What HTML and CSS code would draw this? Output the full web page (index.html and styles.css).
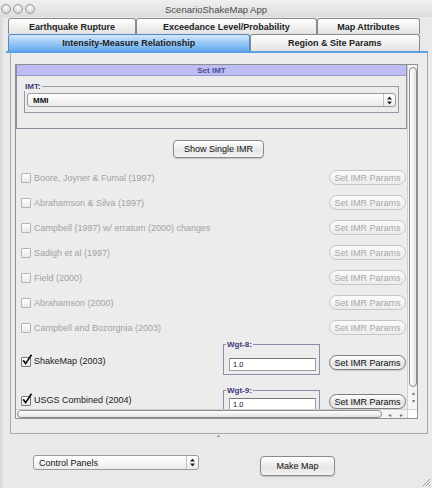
FILE: index.html
```html
<!DOCTYPE html>
<html>
<head>
<meta charset="utf-8">
<link rel="stylesheet" href="styles.css">
</head>
<body>
<div class="window">
  <div class="titlebar">
    <div class="lights"><span></span><span></span><span></span></div>
    <div class="title">ScenarioShakeMap App</div>
    <div></div>
  </div>
  <div class="tabs">
    <div class="tabrow">
      <div class="tab w1">Earthquake Rupture</div>
      <div class="tab w2">Exceedance Level/Probability</div>
      <div class="tab w3">Map Attributes</div>
    </div>
    <div class="tabrow">
      <div class="tab sel w4">Intensity-Measure Relationship</div>
      <div class="tab w5">Region &amp; Site Params</div>
    </div>
  </div>
  <div class="panel">
    <div class="scroll">
      <div class="viewport">
        <div class="imt">
          <div class="imt-head">Set IMT</div>
          <fieldset class="imt-fs">
            <legend>IMT:</legend>
            <div class="select imt-sel"><span>MMI</span><span class="arrows"><svg width="7" height="9" viewBox="0 0 7 9"><path d="M3.5 0.5 L6 3.5 L1 3.5 Z M1 5.5 L6 5.5 L3.5 8.5 Z" fill="#222"/></svg></span></div>
          </fieldset>
        </div>
        <div class="center"><div class="btn show">Show Single IMR</div></div>
        <div class="rows">
          <div class="row dis"><span class="cb"></span><span class="lbl">Boore, Joyner &amp; Fumal (1997)</span><span class="pill">Set IMR Params</span></div>
          <div class="row dis"><span class="cb"></span><span class="lbl">Abrahamson &amp; Silva (1997)</span><span class="pill">Set IMR Params</span></div>
          <div class="row dis"><span class="cb"></span><span class="lbl">Campbell (1997) w/ erratum (2000) changes</span><span class="pill">Set IMR Params</span></div>
          <div class="row dis"><span class="cb"></span><span class="lbl">Sadigh et al (1997)</span><span class="pill">Set IMR Params</span></div>
          <div class="row dis"><span class="cb"></span><span class="lbl">Field (2000)</span><span class="pill">Set IMR Params</span></div>
          <div class="row dis"><span class="cb"></span><span class="lbl">Abrahamson (2000)</span><span class="pill">Set IMR Params</span></div>
          <div class="row dis"><span class="cb"></span><span class="lbl">Campbell and Bozorgnia (2003)</span><span class="pill">Set IMR Params</span></div>
          <div class="row wgt w8">
            <span class="cb on"><svg width="12" height="12" viewBox="0 0 12 12"><path d="M2.2 6.2 L4.6 9.6 L10.5 0.8" stroke="#111" stroke-width="1.7" fill="none"/></svg></span>
            <span class="lbl">ShakeMap (2003)</span>
            <fieldset class="wfs"><legend>Wgt-8:</legend><div class="input">1.0</div></fieldset>
            <span class="pill on">Set IMR Params</span>
          </div>
          <div class="row wgt w9">
            <span class="cb on"><svg width="12" height="12" viewBox="0 0 12 12"><path d="M2.2 6.2 L4.6 9.6 L10.5 0.8" stroke="#111" stroke-width="1.7" fill="none"/></svg></span>
            <span class="lbl">USGS Combined (2004)</span>
            <fieldset class="wfs"><legend>Wgt-9:</legend><div class="input">1.0</div></fieldset>
            <span class="pill on">Set IMR Params</span>
          </div>
        </div>
      </div>
      <div class="vscroll">
        <div class="vthumb"></div>
        <div class="varrows"><span>&#9652;</span><span>&#9662;</span></div>
      </div>
      <div class="hscroll">
        <div class="hthumb"></div>
        <div class="harrows"><span>&#9666;</span><span>&#9656;</span></div>
      </div>
      <div class="corner"></div>
    </div>
  </div>
  <div class="bottom">
    <div class="divider">&#710;</div>
    <div class="controls">
      <div class="select cp"><span>Control Panels</span><span class="arrows"><svg width="7" height="9" viewBox="0 0 7 9"><path d="M3.5 0.5 L6 3.5 L1 3.5 Z M1 5.5 L6 5.5 L3.5 8.5 Z" fill="#222"/></svg></span></div>
      <div class="btn make">Make Map</div>
    </div>
    <svg class="grip" width="10" height="10" viewBox="0 0 10 10"><path d="M9 2 L2 9 M9 5 L5 9 M9 8 L8 9" stroke="#999" stroke-width="1"/></svg>
  </div>
</div>
</body>
</html>
```

FILE: styles.css
```css
* { box-sizing: border-box; }
body {
  margin: 0;
  width: 432px;
  height: 488px;
  overflow: hidden;
  background: #e8e8e8;
  font-family: "Liberation Sans", Arial, sans-serif;
  font-size: 9px;
  color: #222;
}
.window {
  height: 488px;
  display: flex;
  flex-direction: column;
  background: #e9e9e9;
  border-left: 3px solid #dcdcdc;
}
.titlebar {
  height: 17px;
  flex: none;
  display: grid;
  grid-template-columns: 1fr auto 1fr;
  align-items: center;
  background: linear-gradient(#f0f0f0, #dcdcdc);
  margin-left: -3px;
}
.lights { display: flex; gap: 2px; padding-left: 1px; }
.lights span {
  width: 10px; height: 10px; border-radius: 50%;
  border: 1px solid #9a9a9a;
  background: radial-gradient(circle at 50% 35%, #fafafa, #c9c9c9);
}
.title { color: #4a4a4a; font-size: 9.5px; padding-top: 1px; }

.tabs {
  flex: none;
  padding: 1px 8px 0 2px;
  border-bottom: 2px solid #5b9fe4;
  margin: 0 4px 0 3px;
}
.tabrow { display: flex; height: 16px; }
.tabrow + .tabrow { height: 17px; }
.tab {
  border: 1px solid #8a8a8a;
  border-bottom: none;
  border-radius: 3px 3px 0 0;
  background: linear-gradient(#ffffff, #e2e2e2);
  display: flex; align-items: center; justify-content: center;
  font-weight: bold; font-size: 9px; color: #222;
}
.tab.sel {
  background: linear-gradient(#d2e8fc, #92c6f4 55%, #64a9ee);
  border-color: #5886be;
}
.w1 { width: 129px; }
.w2 { width: 183px; }
.w3 { width: 104px; }
.w4 { width: 244px; }
.w5 { width: 172px; }

.panel {
  flex: none;
  margin: 0 4px 0 7px;
  height: 381px;
  border: 1px solid #a8a8a8;
  border-top: none;
  padding: 11px 8px 12px 4px;
  background: #ececec;
}
.scroll {
  display: grid;
  grid-template-columns: 391px 10px;
  grid-template-rows: 344px 9px;
  width: 403px;
  border: 1px solid #8e8e8e;
  background: #ececec;
}
.viewport { overflow: hidden; }

.imt {
  border: 1px solid #8d8d9d;
  border-top: none;
  height: 64px;
  background: #ececec;
}
.imt-head {
  height: 11px;
  background: #bdbdf4;
  border-bottom: 1px solid #9a9ac8;
  color: #4c4c96;
  font-weight: bold;
  font-size: 8px;
  line-height: 11px;
  text-align: center;
}
.imt-fs {
  margin: 6px 7px 0 7px;
  padding: 0 2px 4px 2px;
  border: 1px solid #9898a8;
  height: 31px;
}
.imt-fs legend, .wfs legend {
  font-weight: bold;
  font-size: 8px;
  line-height: 9px;
  padding: 0 1px;
  margin-left: -3px;
  color: #3a3a7c;
}
.select {
  display: flex; align-items: center; justify-content: space-between;
  border: 1px solid #9a9a9a;
  border-radius: 3px;
  background: linear-gradient(#ffffff, #ececec);
  padding-left: 5px;
  color: #111;
}
.imt-sel { height: 14px; font-size: 8px; font-weight: bold; margin-top: 2px; }
.arrows {
  width: 12px; height: 100%;
  display: flex; align-items: center; justify-content: center;
  border-left: 1px solid #c0c0c0;
}

.center { display: flex; justify-content: center; padding-top: 11px; padding-left: 14px; }
.btn {
  display: flex; align-items: center; justify-content: center;
  border: 1px solid #8a8a8a;
  border-radius: 4px;
  background: linear-gradient(#ffffff, #e6e6e6 60%, #f4f4f4);
  box-shadow: 0 1px 1px rgba(0,0,0,0.18);
  color: #111;
  font-size: 9px;
}
.show { width: 91px; height: 18px; }

.rows { padding: 7px 1px 0 5px; }
.row { display: flex; align-items: center; height: 25px; }
.cb {
  width: 10px; height: 10px; flex: none;
  border: 1px solid #b4b4b4;
  border-radius: 1px;
  background: linear-gradient(#ffffff, #e8e8e8);
  position: relative;
}
.cb.on { border-color: #7a7a7a; }
.cb svg { position: absolute; left: -1px; top: -4px; }
.lbl { flex: 1; margin-left: 3px; font-size: 9px; color: #222; }
.dis .lbl { color: #a2a2a2; }
.pill {
  width: 77px; height: 15px; flex: none;
  border: 1px solid #c6c6c6;
  border-radius: 8px;
  background: linear-gradient(#fafafa, #ececec);
  display: flex; align-items: center; justify-content: center;
  color: #a8a8a8;
  font-size: 9px;
}
.pill.on {
  border-color: #7c7c7c;
  color: #111;
  background: linear-gradient(#ffffff, #e4e4e4 60%, #f2f2f2);
  box-shadow: 0 1px 1px rgba(0,0,0,0.15);
}
.row.wgt { align-items: flex-start; }
.w8 { height: 46px; }
.w8 .cb { margin-top: 17px; }
.w8 .lbl { margin-top: 16px; }
.w8 .pill { margin-top: 15px; }
.w9 { height: 40px; }
.w9 .cb { margin-top: 10px; }
.w9 .lbl { margin-top: 9px; }
.w9 .pill { margin-top: 8px; }
.wfs {
  width: 97px;
  margin: 0 9px 0 0;
  padding: 0 3px 3px 5px;
  border: 1px solid #8c8cac;
}
.input {
  margin-top: 9px;
  height: 13px;
  background: #fff;
  border: 1px solid #9c9c9c;
  border-top-color: #777;
  font-size: 7.5px;
  line-height: 11px;
  padding-left: 3px;
  color: #111;
}
.w9 .input { margin-top: 3px; }

.vscroll {
  display: flex; flex-direction: column;
  padding: 0 0 0 1px;
  background: #f4f4f4;
  border-left: 1px solid #d0d0d0;
}
.vthumb {
  flex: 1;
  margin: 2px 0 2px 0;
  border: 1px solid #8c8c8c;
  border-radius: 5px;
  background: linear-gradient(90deg, #ffffff, #e2e2e2);
}
.varrows {
  height: 20px; display: flex; flex-direction: column; align-items: center;
  font-size: 6px; line-height: 8px; color: #777;
}
.hscroll {
  display: flex;
  background: #f4f4f4;
  border-top: 1px solid #d0d0d0;
}
.hthumb {
  flex: 1;
  margin: 0 1px 0 1px;
  border: 1px solid #8c8c8c;
  border-radius: 5px;
  background: linear-gradient(#ffffff, #e2e2e2);
}
.harrows {
  width: 24px; display: flex; justify-content: space-around; align-items: center;
  font-size: 6px; color: #777;
}
.corner { background: #ffffff; border-top: 1px solid #d0d0d0; border-left: 1px solid #d0d0d0; }

.bottom { flex: 1; position: relative; }
.divider { height: 10px; text-align: center; font-size: 9px; line-height: 10px; color: #555; padding-left: 2px; }
.controls { display: flex; align-items: flex-start; padding: 11px 0 0 30px; }
.cp { width: 166px; height: 15px; font-size: 9px; }
.make { width: 75px; height: 20px; margin-left: 61px; margin-top: 1px; }
.grip { position: absolute; right: 1px; bottom: 1px; }
```
